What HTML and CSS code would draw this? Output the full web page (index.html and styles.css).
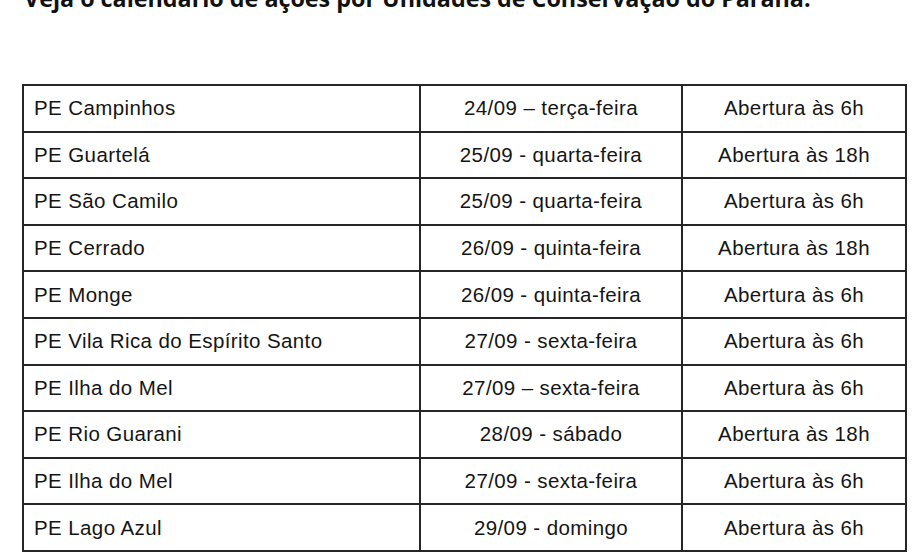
FILE: index.html
```html
<!DOCTYPE html>
<html lang="pt-BR">
<head>
<meta charset="utf-8">
<title>Calendário de ações</title>
<link rel="stylesheet" href="styles.css">
</head>
<body>
<h2 class="heading">Veja o calendário de ações por Unidades de Conservação do Paraná.</h2>
<table class="schedule">
  <colgroup>
    <col class="c-name"><col class="c-date"><col class="c-time">
  </colgroup>
  <tbody>
    <tr><td class="name">PE Campinhos</td><td>24/09 – terça-feira</td><td>Abertura às 6h</td></tr>
    <tr><td class="name">PE Guartelá</td><td>25/09 - quarta-feira</td><td>Abertura às 18h</td></tr>
    <tr><td class="name">PE São Camilo</td><td>25/09 - quarta-feira</td><td>Abertura às 6h</td></tr>
    <tr><td class="name">PE Cerrado</td><td>26/09 - quinta-feira</td><td>Abertura às 18h</td></tr>
    <tr><td class="name">PE Monge</td><td>26/09 - quinta-feira</td><td>Abertura às 6h</td></tr>
    <tr><td class="name">PE Vila Rica do Espírito Santo</td><td>27/09 - sexta-feira</td><td>Abertura às 6h</td></tr>
    <tr><td class="name">PE Ilha do Mel</td><td>27/09 – sexta-feira</td><td>Abertura às 6h</td></tr>
    <tr><td class="name">PE Rio Guarani</td><td>28/09 - sábado</td><td>Abertura às 18h</td></tr>
    <tr><td class="name">PE Ilha do Mel</td><td>27/09 - sexta-feira</td><td>Abertura às 6h</td></tr>
    <tr><td class="name">PE Lago Azul</td><td>29/09 - domingo</td><td>Abertura às 6h</td></tr>
  </tbody>
</table>
</body>
</html>
```
FILE: styles.css
```css
html, body {
  margin: 0;
  padding: 0;
  background: #ffffff;
  overflow: hidden;
}

.heading {
  margin: -17px 0 0 24px;
  font-family: "Open Sans", "Liberation Sans", sans-serif;
  font-weight: 700;
  font-size: 23.3px;
  line-height: 30px;
  color: #111111;
  white-space: nowrap;
}

.schedule {
  margin: 71px 0 0 22px;
  width: 883px;
  border-collapse: collapse;
  table-layout: fixed;
  font-family: "Liberation Sans", Arial, sans-serif;
  font-size: 20.5px;
  letter-spacing: 0.4px;
  color: #151515;
}

.c-name { width: 397px; }
.c-date { width: 262px; }
.c-time { width: 224px; }

.schedule td {
  border: 2px solid #262626;
  height: 46.6px;
  padding: 0;
  text-align: center;
  vertical-align: middle;
  white-space: nowrap;
  box-sizing: border-box;
}

.schedule td.name {
  text-align: left;
  padding-left: 10px;
}
```
